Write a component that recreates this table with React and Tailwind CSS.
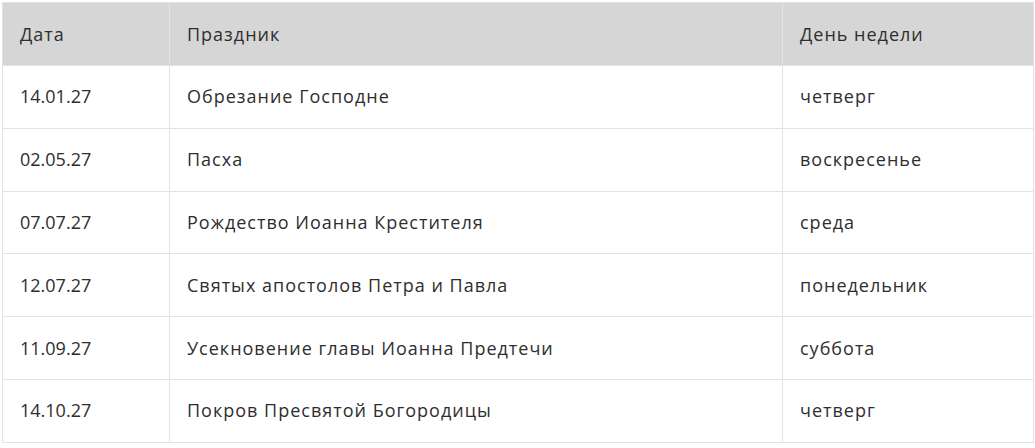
const rows = [
  ['14.01.27', 'Обрезание Господне', 'четверг'],
  ['02.05.27', 'Пасха', 'воскресенье'],
  ['07.07.27', 'Рождество Иоанна Крестителя', 'среда'],
  ['12.07.27', 'Святых апостолов Петра и Павла', 'понедельник'],
  ['11.09.27', 'Усекновение главы Иоанна Предтечи', 'суббота'],
  ['14.10.27', 'Покров Пресвятой Богородицы', 'четверг'],
]

export default function App() {
  return (
    <div className="bg-white pt-[2px] pl-[2px]" style={{ fontFamily: '"Open Sans", sans-serif' }}>
      <table className="w-[1031px] border-collapse text-[18px] tracking-[1px] text-[#2e2e2e] table-fixed">
        <colgroup>
          <col className="w-[167px]" />
          <col className="w-[613px]" />
          <col className="w-[251px]" />
        </colgroup>
        <thead>
          <tr className="bg-[#d6d6d6] h-[63px]">
            <th className="text-left font-normal pl-[17px] border border-[#e2e2e2]">Дата</th>
            <th className="text-left font-normal pl-[17px] border border-[#e2e2e2]">Праздник</th>
            <th className="text-left font-normal pl-[17px] border border-[#e2e2e2]">День недели</th>
          </tr>
        </thead>
        <tbody>
          {rows.map(r => (
            <tr key={r[0]} className="h-[62.8px]">
              {r.map((c, i) => (
                <td key={i} className={`pl-[17px] border border-[#e2e2e2] ${i === 0 ? 'tracking-[0px]' : ''}`}>{c}</td>
              ))}
            </tr>
          ))}
        </tbody>
      </table>
    </div>
  )
}
